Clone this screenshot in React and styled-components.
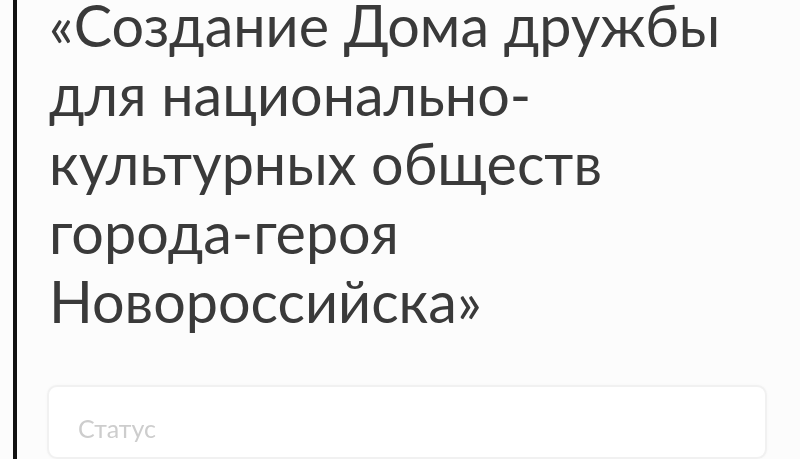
import styled, { createGlobalStyle } from "styled-components";

const Global = createGlobalStyle`
    html, body {
        margin: 0;
        padding: 0;
        background: #fcfcfc;
        overflow: hidden;
    }
    * {
        box-sizing: border-box;
    }
`;

const App = () => {
    return (
        <>
            <Global />
            <Screen>
                <Edge />
                <Content>
                    <Title>
                        «Создание Дома дружбы
                        <br />
                        для национально-
                        <br />
                        культурных обществ
                        <br />
                        города-героя
                        <br />
                        Новороссийска»
                    </Title>
                    <Card>
                        <Label>Статус</Label>
                    </Card>
                </Content>
            </Screen>
        </>
    );
};

export default App;

const Screen = styled.div`
    width: 800px;
    height: 459px;
    display: flex;
    background: #fcfcfc;
    padding-left: 13px;
    overflow: hidden;
`;

const Edge = styled.div`
    width: 4px;
    height: 100%;
    background: #111;
    flex-shrink: 0;
`;

const Content = styled.div`
    flex: 1;
    display: flex;
    flex-direction: column;
    padding: 0 33px 0 32px;
`;

const Title = styled.h1`
    margin: -9.75px 0 0 0;
    font-family: Lato, "Noto Sans", sans-serif;
    font-weight: 400;
    font-size: 57.5px;
    line-height: 69px;
    color: #3a3a3a;
`;

const Card = styled.div`
    margin-top: 50px;
    margin-left: -2px;
    height: 120px;
    background: #fff;
    border: 2px solid #f1f1f1;
    border-radius: 10px;
    box-shadow: 0 0 3px rgba(0, 0, 0, 0.03);
    padding: 26px 0 0 29px;
`;

const Label = styled.div`
    font-family: Lato, "Noto Sans", sans-serif;
    font-size: 25px;
    line-height: 30px;
    color: #cdcdcd;
    filter: blur(0.6px);
`;
